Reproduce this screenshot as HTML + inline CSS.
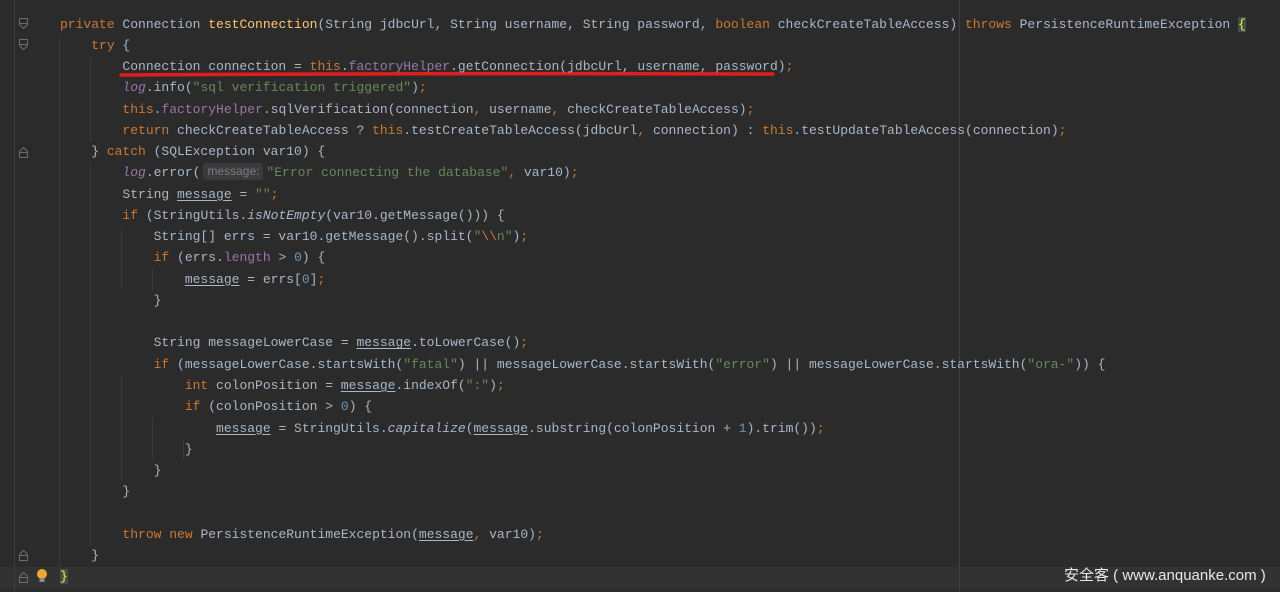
<!DOCTYPE html>
<html><head><meta charset="utf-8"><style>
html,body{margin:0;padding:0;}
body{width:1280px;height:592px;background:#2b2b2b;position:relative;overflow:hidden;font-family:"Liberation Mono",monospace;}
pre{position:absolute;left:60px;top:13.5px;margin:0;font-size:13px;line-height:21.27px;color:#a9b7c6;font-family:"Liberation Mono",monospace;}
.k{color:#cc7832}.s{color:#6a8759}.f{color:#9876aa}.m{color:#ffc66d}.n{color:#6897bb}.i{font-style:italic}.u{text-decoration:underline;text-underline-offset:2px}
.hint{display:inline-block;font-family:"Liberation Sans",sans-serif;font-size:12px;color:#7a7e85;background:#3b3b3b;border-radius:3px;padding:0 4px;width:52px;line-height:17px;margin-left:3px;margin-right:3px;vertical-align:1px}
.vl{position:absolute;width:1px;background:#3a3a3a}
.br{background:#3b514d;color:#ffef28}
</style></head><body>
<div style="position:absolute;left:0;top:567px;width:1280px;height:21px;background:#323232"></div>
<div class="vl" style="left:14px;top:0;height:592px;background:#3c3f41"></div>
<div class="vl" style="left:959px;top:0;height:592px;background:#3f3f3f"></div>
<div class="vl" style="left:59px;top:36px;height:530px"></div>
<div class="vl" style="left:90px;top:57px;height:85px"></div>
<div class="vl" style="left:90px;top:163px;height:383px"></div>
<div class="vl" style="left:121px;top:227px;height:63px"></div>
<div class="vl" style="left:121px;top:376px;height:105px"></div>
<div class="vl" style="left:152px;top:269px;height:21px"></div>
<div class="vl" style="left:152px;top:418px;height:42px"></div>
<div class="vl" style="left:183px;top:438px;height:21px"></div>
<svg width="30" height="592" style="position:absolute;left:14px;top:0" fill="none" stroke="#6b6e70" stroke-width="1">
<path d="M5.5 18.5h8v6l-4 4l-4-4z M6 23.5h7"/>
<path d="M5.5 39.5h8v6l-4 4l-4-4z M6 44.5h7"/>
<path d="M5.5 157.5h8v-6l-4-4l-4 4z M6 152.5h7"/>
<path d="M5.5 560.5h8v-6l-4-4l-4 4z M6 555.5h7"/>
<path d="M5.5 582.5h8v-6l-4-4l-4 4z M6 577.5h7"/>
</svg>
<svg width="14" height="16" style="position:absolute;left:35px;top:568px"><circle cx="7" cy="6" r="5" fill="#f0a732"/><rect x="4.5" y="10" width="5" height="4" fill="#8c8c8c"/></svg>
<svg width="660" height="12" style="position:absolute;left:118px;top:70px"><path d="M3 5 Q300 3 655 4" stroke="#e31d1d" stroke-width="3.5" fill="none" stroke-linecap="round"/></svg>
<pre><span class="k">private</span> Connection <span class="m">testConnection</span>(String jdbcUrl, String username, String password, <span class="k">boolean</span> checkCreateTableAccess) <span class="k">throws</span> PersistenceRuntimeException <span class="br">{</span>
    <span class="k">try</span> {
        Connection connection = <span class="k">this</span>.<span class="f">factoryHelper</span>.getConnection(jdbcUrl, username, password)<span class="k">;</span>
        <span class="f i">log</span>.info(<span class="s">"sql verification triggered"</span>)<span class="k">;</span>
        <span class="k">this</span>.<span class="f">factoryHelper</span>.sqlVerification(connection<span class="k">,</span> username<span class="k">,</span> checkCreateTableAccess)<span class="k">;</span>
        <span class="k">return</span> checkCreateTableAccess ? <span class="k">this</span>.testCreateTableAccess(jdbcUrl<span class="k">,</span> connection) : <span class="k">this</span>.testUpdateTableAccess(connection)<span class="k">;</span>
    } <span class="k">catch</span> (SQLException var10) {
        <span class="f i">log</span>.error(<span class="hint">message:</span><span class="s">"Error connecting the database"</span><span class="k">,</span> var10)<span class="k">;</span>
        String <span class="u">message</span> = <span class="s">""</span><span class="k">;</span>
        <span class="k">if</span> (StringUtils.<span class="i">isNotEmpty</span>(var10.getMessage())) {
            String[] errs = var10.getMessage().split(<span class="s">"<span class="k">\\</span>n"</span>)<span class="k">;</span>
            <span class="k">if</span> (errs.<span class="f">length</span> &gt; <span class="n">0</span>) {
                <span class="u">message</span> = errs[<span class="n">0</span>]<span class="k">;</span>
            }

            String messageLowerCase = <span class="u">message</span>.toLowerCase()<span class="k">;</span>
            <span class="k">if</span> (messageLowerCase.startsWith(<span class="s">"fatal"</span>) || messageLowerCase.startsWith(<span class="s">"error"</span>) || messageLowerCase.startsWith(<span class="s">"ora-"</span>)) {
                <span class="k">int</span> colonPosition = <span class="u">message</span>.indexOf(<span class="s">":"</span>)<span class="k">;</span>
                <span class="k">if</span> (colonPosition &gt; <span class="n">0</span>) {
                    <span class="u">message</span> = StringUtils.<span class="i">capitalize</span>(<span class="u">message</span>.substring(colonPosition + <span class="n">1</span>).trim())<span class="k">;</span>
                }
            }
        }

        <span class="k">throw new</span> PersistenceRuntimeException(<span class="u">message</span><span class="k">,</span> var10)<span class="k">;</span>
    }
<span class="br">}</span></pre>
<div style="position:absolute;left:1064px;top:564px;font-family:'Liberation Sans','Noto Sans CJK SC',sans-serif;font-size:15px;color:#e8e8e8;white-space:nowrap">安全客 ( www.anquanke.com )</div>
</body></html>
